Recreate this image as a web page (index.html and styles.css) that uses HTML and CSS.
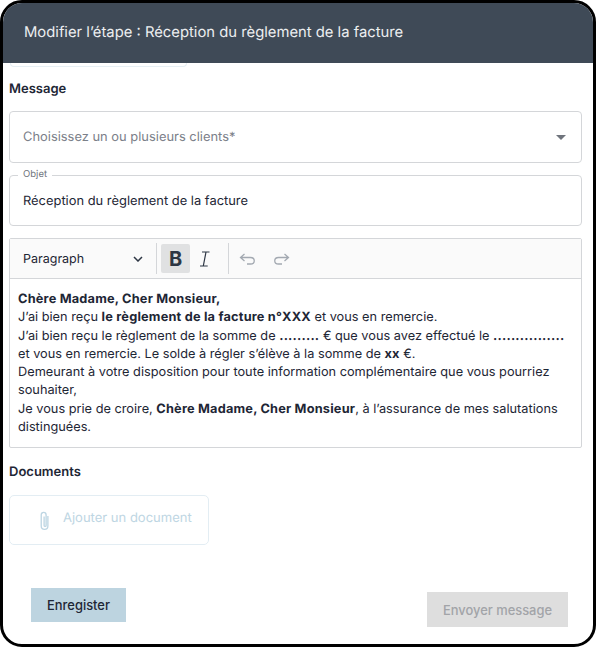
FILE: index.html
```html
<!DOCTYPE html>
<html lang="fr">

<head>
    <meta charset="UTF-8">
    <meta name="viewport" content="width=device-width, initial-scale=1.0">
    <title>Modifier l'étape</title>
    <link rel="stylesheet" href="styles.css">
</head>

<body>
    <div class="modal">
        <header class="modal-header">Modifier l’étape : Réception du règlement de la facture</header>
        <div class="modal-body">
            <div class="cut-box"></div>
            <h2 class="section-title">Message</h2>

            <div class="field select-field">
                <span class="placeholder">Choisissez un ou plusieurs clients*</span>
                <span class="caret"></span>
            </div>

            <fieldset class="field subject-field">
                <legend>Objet</legend>
                Réception du règlement de la facture
            </fieldset>

            <div class="editor">
                <div class="toolbar">
                    <div class="format-select">
                        <span>Paragraph</span>
                        <svg width="10" height="6" viewBox="0 0 10 6" fill="none" stroke="#2d3644" stroke-width="1.5"><path d="M1 1l4 4 4-4" /></svg>
                    </div>
                    <span class="sep"></span>
                    <button class="tool tool-on"><b>B</b></button>
                    <button class="tool">
                        <svg width="14" height="16" viewBox="0 0 14 16" fill="none" stroke="#2d3644" stroke-width="1.200"><path d="M4 1h7.500M2 15h7.700M8 1L5.300 15" /></svg>
                    </button>
                    <span class="sep sep-2"></span>
                    <button class="tool tool-off">
                        <svg width="18" height="12" viewBox="0 0 18 12" fill="none" stroke="#a3a9b1" stroke-width="1.3"><path d="M5.500 1L1.500 4.500l4 3.500M1.500 4.500h10c5 0 5 6.500 0 6.500H8" /></svg>
                    </button>
                    <button class="tool tool-off">
                        <svg width="18" height="12" viewBox="0 0 18 12" fill="none" stroke="#a3a9b1" stroke-width="1.3"><path d="M12.500 1l4 3.500-4 3.500M16.500 4.500h-10c-5 0-5 6.500 0 6.500H10" /></svg>
                    </button>
                </div>
                <div class="editor-text">
                    <strong>Chère Madame, Cher Monsieur,</strong><br>
                    J’ai bien reçu <strong>le règlement de la facture n°XXX</strong> et vous en remercie.<br>
                    J’ai bien reçu le règlement de la somme de <strong>.........</strong> € que vous avez effectué le <strong>................</strong> et vous en remercie. Le solde à régler s’élève à la somme de <strong>xx</strong> €.<br>
                    Demeurant à votre disposition pour toute information complémentaire que vous pourriez souhaiter,<br>
                    Je vous prie de croire, <strong>Chère Madame, Cher Monsieur</strong>, à l’assurance de mes salutations distinguées.
                </div>
            </div>

            <h2 class="section-title docs-title">Documents</h2>
            <div class="add-doc">
                <svg width="14" height="20" viewBox="0 0 12 18" fill="none" stroke="#bed6e3" stroke-width="1.2"><path d="M9.500 4.500v9a3 3 0 0 1-6 0V3.500a2.200 2.200 0 0 1 4.400 0v9.500a.9.9 0 0 1-1.800 0V5" /></svg>
                <span>Ajouter un document</span>
            </div>

            <div class="actions">
                <button class="btn btn-save">Enregister</button>
                <button class="btn btn-send">Envoyer message</button>
            </div>
        </div>
    </div>
</body>

</html>
```

FILE: styles.css
```css
* {
    box-sizing: border-box;
}

html,
body {
    height: 100%;
}

body {
    margin: 0;
    background: #fff;
    font-family: Inter, "Liberation Sans", Arial, sans-serif;
    color: #1e2635;
    text-rendering: geometricPrecision;
}

.modal {
    width: 596px;
    height: 647px;
    border: 3px solid #000;
    border-radius: 22px;
    overflow: hidden;
    background: #fff;
}

.modal-header {
    height: 60px;
    padding: 0 21px 2px;
    display: flex;
    align-items: center;
    background: #3f4a57;
    color: #eceef0;
    font-size: 14.800px;
}

.modal-body {
    padding: 0 11px 0 6px;
}

.cut-box {
    width: 177px;
    height: 4px;
    margin-left: 1px;
    border: 1px solid #e6eff4;
    border-top: 0;
    border-radius: 0 0 6px 6px;
}

.section-title {
    margin: 14px 0 0;
    font-size: 13px;
    line-height: 16px;
    font-weight: 600;
}

.field {
    border: 1px solid #d4d6d9;
    border-radius: 4px;
    font-size: 12.900px;
}

.select-field {
    height: 52px;
    margin-top: 14px;
    padding: 0 15px 0 13px;
    display: flex;
    align-items: center;
    justify-content: space-between;
}

.placeholder {
    color: #7b8089;
}

.caret {
    border-left: 5px solid transparent;
    border-right: 5px solid transparent;
    border-top: 5px solid #6f747c;
}

.subject-field {
    height: 57px;
    margin: 6px 0 0;
    padding: 11px 13px 0;
    min-width: 0;
    line-height: 20px;
}

.subject-field legend {
    margin-left: -5px;
    padding: 0 5px;
    font-size: 9.500px;
    line-height: 12px;
    color: #6f747c;
}

.editor {
    height: 210px;
    margin-top: 12px;
    border: 1px solid #d4d6d9;
    border-radius: 2px;
}

.toolbar {
    height: 40px;
    padding: 0 4px 0 13px;
    display: flex;
    align-items: center;
    background: #fafafa;
    border-bottom: 1px solid #d4d6d9;
}

.format-select {
    width: 120px;
    padding-top: 1px;
    display: flex;
    align-items: center;
    justify-content: space-between;
    font-size: 12.500px;
}

.sep {
    width: 1px;
    height: 31px;
    margin: 0 4px 0 13px;
    background: #d4d6d9;
}

.sep-2 {
    margin: 0 2px 0 9px;
}

.tool {
    width: 29px;
    height: 29px;
    padding: 0;
    border: 0;
    border-radius: 2px;
    background: none;
    display: flex;
    align-items: center;
    justify-content: center;
}

.tool-on {
    background: #e0e1e2;
    font-family: inherit;
    font-size: 20px;
    color: #2d3644;
}

.tool-off {
    width: 33px;
}

.editor-text {
    padding: 12px 8px 0;
    font-size: 12.750px;
    line-height: 18.300px;
}

.editor-text strong {
    font-weight: 700;
    letter-spacing: 0.2px;
}

.docs-title {
    margin-top: 16px;
}

.add-doc {
    width: 200px;
    height: 50px;
    margin-top: 15px;
    padding: 0 14px 5px 27px;
    display: flex;
    align-items: center;
    gap: 12px;
    border: 1px solid #e3edf3;
    border-radius: 5px;
    color: #bed6e3;
    font-size: 13px;
}

.add-doc svg {
    margin-top: 6px;
}

.actions {
    margin-top: 43px;
    padding: 0 14px 0 22px;
    display: flex;
    justify-content: space-between;
    align-items: flex-start;
}

.btn {
    border: 0;
    height: 34px;
    font-family: inherit;
    font-size: 12.900px;
    font-weight: 500;
}

.btn-save {
    width: 95px;
    background: #bdd4e0;
    color: #1e2635;
}

.btn-send {
    width: 141px;
    height: 35px;
    margin-top: 4px;
    padding-top: 2px;
    background: #dedede;
    color: #a2a4a8;
}
```
